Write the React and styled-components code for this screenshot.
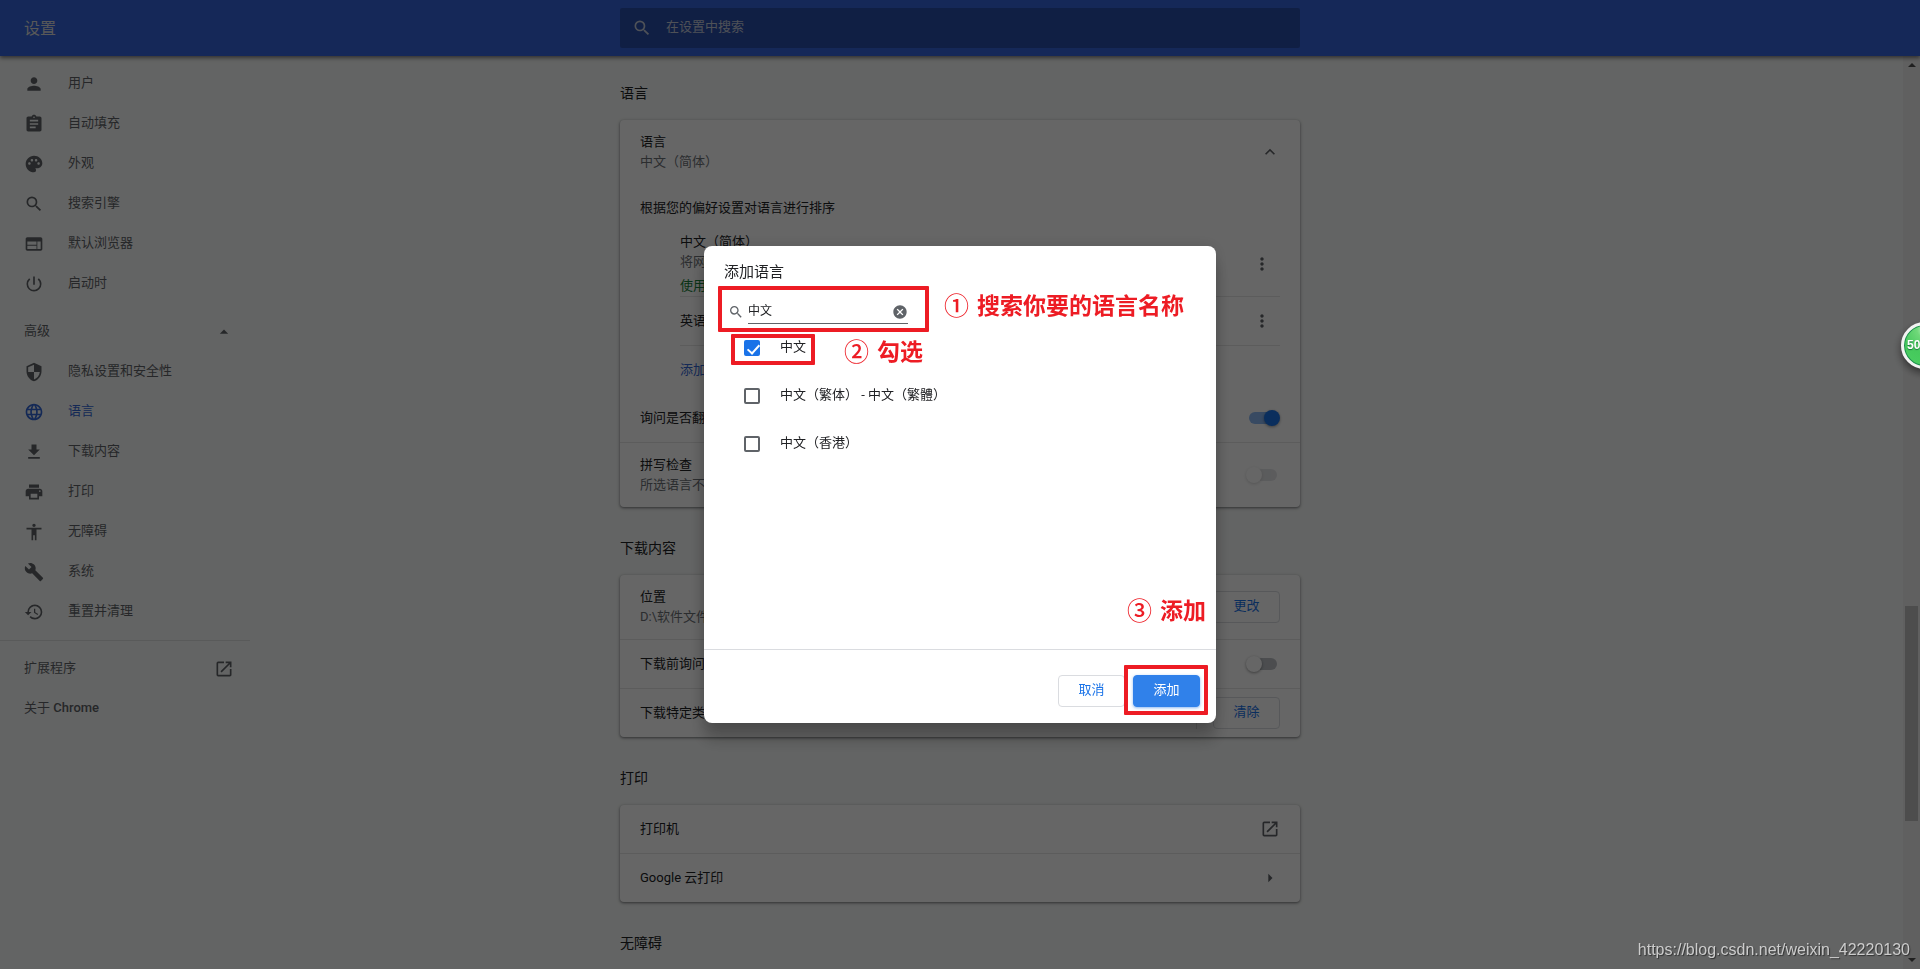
import styled, { createGlobalStyle, css } from 'styled-components'
import {
  MdAccessibility,
  MdArrowDropUp,
  MdArrowRight,
  MdAssignment,
  MdBuild,
  MdCancel,
  MdExpandLess,
  MdFileDownload,
  MdHistory,
  MdLanguage,
  MdMoreVert,
  MdOpenInNew,
  MdPalette,
  MdPerson,
  MdPowerSettingsNew,
  MdPrint,
  MdSearch,
  MdSecurity,
  MdWeb
} from 'react-icons/md'

const GlobalStyle = createGlobalStyle`
  * {
    box-sizing: border-box;
  }

  body {
    background: #f8faf9;
    color: #202124;
    font-family: Roboto, 'Noto Sans CJK SC', sans-serif;
    font-size: 13px;
    line-height: 20px;
    margin: 0;
    overflow: hidden;
  }

  button,
  input {
    font: inherit;
  }

  h1, h2, p {
    font-weight: 400;
    margin: 0;
  }
`

const Page = styled.div`
  display: flex;
  flex-direction: column;
  height: 100vh;
  overflow: hidden;
`

const Side = styled.div`
  display: flex;
  flex: 1 1 0;
  justify-content: ${props => props.$end ? 'flex-end' : 'flex-start'};
  min-width: 0;
`

const Toolbar = styled.header`
  align-items: center;
  background: #3565dc;
  box-shadow: 0 2px 4px rgba(0, 0, 0, 0.5);
  display: flex;
  flex: none;
  height: 56px;
  z-index: 1;
`

const ToolbarTitle = styled.h1`
  color: #ddd;
  font-size: 16px;
  line-height: 24px;
  padding: 2px 0 0 24px;
`

const ToolbarSearch = styled.label`
  align-items: center;
  background: rgba(0, 0, 0, 0.22);
  border-radius: 2px;
  color: #c3cad9;
  display: flex;
  flex: 0 1 680px;
  gap: 14px;
  height: 40px;
  padding: 0 12px;

  input {
    background: none;
    border: 0;
    color: inherit;
    flex: 1;
    outline: 0;
    padding: 0 0 2px;
  }

  input::placeholder {
    color: inherit;
  }
`

const Body = styled.div`
  display: flex;
  flex: 1;
  min-height: 0;
`

const Menu = styled.nav`
  padding-top: 8px;
  width: 250px;
`

const MenuItem = styled.a`
  align-items: center;
  color: ${props => props.$selected ? '#3367d6' : '#5f6368'};
  display: flex;
  gap: 24px;
  height: 40px;
  padding: 0 16px 0 24px;
  text-decoration: none;

  span {
    flex: 1;
    padding-bottom: 2px;
  }

  b {
    font-weight: 500;
  }
`

const MenuToggle = styled.button`
  align-items: center;
  background: none;
  border: 0;
  color: #5f6368;
  display: flex;
  height: 40px;
  justify-content: space-between;
  margin-top: 8px;
  padding: 0 16px 0 24px;
  width: 100%;

  span {
    padding-bottom: 2px;
  }
`

const MenuSeparator = styled.hr`
  border: 0;
  border-top: 1px solid #dfe1e2;
  margin: 8px 0;
`

const Main = styled.main`
  flex: 0 1 680px;
`

const SectionTitle = styled.h2`
  font-size: 14px;
  height: 68px;
  line-height: 20px;
  padding-top: 31px;

  section:first-child > & {
    height: 64px;
    padding-top: 27px;
  }
`

const Card = styled.div`
  background: white;
  border-radius: 4px;
  box-shadow: 0 1px 2px rgba(60, 64, 67, 0.4), 0 1px 3px 1px rgba(60, 64, 67, 0.25);
`

const Row = styled.div`
  align-items: center;
  border-top: ${props => props.$line ? '1px solid #e6e6e6' : '0'};
  display: flex;
  justify-content: space-between;
  min-height: ${props => (props.$tall ? 64 : 48) + (props.$line ? 1 : 0)}px;
  padding: 0 20px;

  > svg {
    color: #5f6368;
  }
`

const Secondary = styled.p`
  color: #6c7176;
`

const LanguageList = styled.div`
  padding: 0 20px 0 60px;
`

const Language = styled.div`
  align-items: center;
  border-bottom: ${props => props.$last ? '0' : '1px solid #e6e6e6'};
  display: flex;
  justify-content: space-between;
  min-height: ${props => props.$last ? 48 : 49}px;
`

const InUse = styled.p`
  color: #188038;
  padding: 4px 0 0;
`

const DotsButton = styled.button`
  align-items: center;
  background: none;
  border: 0;
  color: #5f6368;
  display: flex;
  height: 36px;
  justify-content: center;
  padding: 0;
  width: 36px;
`

const AddLink = styled.a`
  color: #3367d6;
  text-decoration: none;
`

const Toggle = styled.input`
  appearance: none;
  background: #bdc1c6;
  border-radius: 6px;
  height: 12px;
  margin: 0 3px;
  opacity: ${props => props.disabled ? 0.4 : 1};
  position: relative;
  width: 28px;

  &:before {
    background: white;
    border-radius: 50%;
    box-shadow: 0 1px 3px rgba(0, 0, 0, 0.4);
    content: '';
    height: 16px;
    left: -3px;
    position: absolute;
    top: -2px;
    width: 16px;
  }

  &:checked {
    background: #8cb9f4;
  }

  &:checked:before {
    background: #1a73e8;
    left: 15px;
  }
`

const Button = styled.button`
  background: none;
  border: 1px solid #dadce0;
  border-radius: 4px;
  color: #1a73e8;
  height: 32px;
  line-height: 20px;
  padding: 0 19px 2px;
  width: 67px;

  ${props => props.$primary && css`
    background: #3081ea;
    border-color: #3081ea;
    box-shadow: 0 1px 3px rgba(26, 115, 232, 0.5);
    color: white;
  `}
`

const Divided = styled.div`
  border-left: 1px solid #dfdfdf;
  padding-left: 16px;
`

const Scrollbar = styled.div`
  align-items: center;
  background: #f1f1f1;
  display: flex;
  flex-direction: column;
  justify-content: space-between;
  padding: 7px 0;
  width: 17px;
`

const Arrow = styled.i`
  border: 4px solid transparent;
  border-${props => props.$down ? 'top' : 'bottom'}-color: #505050;
  border-${props => props.$down ? 'bottom' : 'top'}-width: 0;
  height: 4px;
  width: 8px;
`

const ScrollTrack = styled.div`
  display: grid;
  flex: 1;
  grid-template-rows: 539fr 215fr 137fr;
  width: 13px;
`

const Thumb = styled.div`
  background: #c1c1c1;
  grid-row: 2;
`

const Backdrop = styled.div`
  align-items: center;
  background: rgba(0, 0, 0, 0.6);
  display: flex;
  inset: 0;
  justify-content: center;
  position: fixed;
  z-index: 2;
`

const Dialog = styled.div`
  background: white;
  border-radius: 8px;
  box-shadow: 0 0 16px rgba(0, 0, 0, 0.12), 0 16px 16px rgba(0, 0, 0, 0.24);
  position: relative;
  width: 512px;
`

const DialogTitle = styled.h2`
  font-size: 15px;
  line-height: 22px;
  padding: 15px 20px 17px;
`

const DialogSearch = styled.label`
  align-items: center;
  color: #5f6368;
  display: flex;
  gap: 4px;
  height: 24px;
  margin-left: 24px;
`

const SearchField = styled.div`
  align-items: center;
  border-bottom: 1px solid #5f6368;
  display: flex;
  height: 24px;
  width: 160px;

  input {
    border: 0;
    color: #202124;
    flex: 1;
    font-size: 12px;
    min-width: 0;
    outline: 0;
    padding: 0 0 2px;
  }

  button {
    background: none;
    border: 0;
    color: #5f6368;
    display: flex;
    padding: 0;
  }
`

const Options = styled.div`
  min-height: 325px;
  padding-left: 40px;
`

const Option = styled.label`
  align-items: center;
  display: flex;
  gap: 20px;
  height: 48px;

  span {
    padding-bottom: 2px;
  }
`

const Checkbox = styled.input`
  appearance: none;
  border: 2px solid #5f6368;
  border-radius: 2px;
  height: 16px;
  margin: 0;
  position: relative;
  width: 16px;

  &:checked {
    background: #1a73e8;
    border-color: #1a73e8;
  }

  &:checked:before {
    border: solid white;
    border-width: 0 2px 2px 0;
    content: '';
    height: 10px;
    left: 4px;
    position: absolute;
    top: 0;
    transform: rotate(42deg);
    width: 5px;
  }
`

const DialogFooter = styled.div`
  border-top: 1px solid #dadce0;
  display: flex;
  gap: 8px;
  justify-content: flex-end;
  padding: 25px 16px 16px;
`

// red frames and captions drawn over the dialog
const Frame = styled.div`
  border: 4px solid #ed1c24;
  border-radius: 1px;
  height: ${props => props.$h}px;
  left: ${props => props.$x}px;
  pointer-events: none;
  position: absolute;
  top: ${props => props.$y}px;
  width: ${props => props.$w}px;
`

const Caption = styled.p`
  align-items: center;
  color: #ed1c24;
  display: flex;
  font-family: 'Noto Sans CJK SC', sans-serif;
  font-size: 23px;
  font-weight: 700;
  gap: 8px;
  left: ${props => props.$x}px;
  line-height: 32px;
  position: absolute;
  top: ${props => props.$y}px;
  white-space: nowrap;

  span {
    font-size: 25px;
    font-weight: 500;
  }
`

const Ball = styled.div`
  background: radial-gradient(circle at 50% 12%, #b8f0bb 0, #6fd879 18%, #45c95c 55%, #4bd062 100%);
  border: 3px solid #f2f2f2;
  border-radius: 50%;
  box-shadow: inset 0 0 0 1px #1e8b50, 0 4px 8px rgba(0, 0, 0, 0.5);
  color: white;
  font-family: 'Liberation Sans', sans-serif;
  font-size: 12px;
  font-weight: 700;
  height: 47px;
  line-height: 41px;
  padding-left: 3px;
  position: fixed;
  right: -28px;
  text-shadow: 0 1px 1px #17703a;
  top: 322px;
  width: 47px;
  z-index: 3;
`

const Watermark = styled.p`
  bottom: 9px;
  color: #ccc;
  font-family: 'Liberation Sans', sans-serif;
  font-size: 16px;
  position: fixed;
  right: 10px;
  text-shadow: 1px 1px 1px rgba(0, 0, 0, 0.5);
  z-index: 3;
`

const basicItems = [
  [MdPerson, '用户'],
  [MdAssignment, '自动填充'],
  [MdPalette, '外观'],
  [MdSearch, '搜索引擎'],
  [MdWeb, '默认浏览器'],
  [MdPowerSettingsNew, '启动时']
]

const advancedItems = [
  [MdSecurity, '隐私设置和安全性'],
  [MdLanguage, '语言'],
  [MdFileDownload, '下载内容'],
  [MdPrint, '打印'],
  [MdAccessibility, '无障碍'],
  [MdBuild, '系统'],
  [MdHistory, '重置并清理']
]

const options = ['中文', '中文（繁体） - 中文（繁體）', '中文（香港）']

const MenuItems = ({ items }) => items.map(([Icon, label]) => (
  <MenuItem key={label} href="#" $selected={label === '语言'}>
    <Icon size={20} />
    <span>{label}</span>
  </MenuItem>
))

const Sidebar = () => (
  <Menu>
    <MenuItems items={basicItems} />
    <MenuToggle>
      <span>高级</span>
      <MdArrowDropUp size={20} />
    </MenuToggle>
    <MenuItems items={advancedItems} />
    <MenuSeparator />
    <MenuItem href="#">
      <span>扩展程序</span>
      <MdOpenInNew size={20} />
    </MenuItem>
    <MenuItem href="#">
      <span>关于 <b>Chrome</b></span>
    </MenuItem>
  </Menu>
)

const LanguageSection = () => (
  <section>
    <SectionTitle>语言</SectionTitle>
    <Card>
      <Row $tall>
        <div>
          语言
          <Secondary>中文（简体）</Secondary>
        </div>
        <MdExpandLess size={20} />
      </Row>
      <Row>根据您的偏好设置对语言进行排序</Row>
      <LanguageList>
        <Language>
          <div>
            中文（简体）
            <Secondary>将网页</Secondary>
            <InUse>使用中</InUse>
          </div>
          <DotsButton aria-label="更多操作"><MdMoreVert size={20} /></DotsButton>
        </Language>
        <Language>
          英语
          <DotsButton aria-label="更多操作"><MdMoreVert size={20} /></DotsButton>
        </Language>
        <Language $last>
          <AddLink href="#">添加语言</AddLink>
        </Language>
      </LanguageList>
      <Row>
        <label htmlFor="translate">询问是否翻译网页</label>
        <Toggle id="translate" type="checkbox" defaultChecked />
      </Row>
      <Row $tall $line>
        <label htmlFor="spelling">
          拼写检查
          <Secondary>所选语言不支持拼写检查</Secondary>
        </label>
        <Toggle id="spelling" type="checkbox" disabled />
      </Row>
    </Card>
  </section>
)

const DownloadSection = () => (
  <section>
    <SectionTitle>下载内容</SectionTitle>
    <Card>
      <Row $tall>
        <div>
          位置
          <Secondary>D:\软件文件</Secondary>
        </div>
        <Button>更改</Button>
      </Row>
      <Row $line>
        <label htmlFor="ask">下载前询问保存位置</label>
        <Toggle id="ask" type="checkbox" />
      </Row>
      <Row $line>
        下载特定类型的文件后自动打开
        <Divided><Button>清除</Button></Divided>
      </Row>
    </Card>
  </section>
)

const PrintSection = () => (
  <section>
    <SectionTitle>打印</SectionTitle>
    <Card>
      <Row>
        打印机
        <MdOpenInNew size={20} />
      </Row>
      <Row $line>
        Google 云打印
        <MdArrowRight size={20} />
      </Row>
    </Card>
  </section>
)

const AddLanguageDialog = () => (
  <Backdrop>
    <Dialog role="dialog" aria-labelledby="dialog-title">
      <DialogTitle id="dialog-title">添加语言</DialogTitle>
      <DialogSearch>
        <MdSearch size={16} />
        <SearchField>
          <input type="text" aria-label="搜索语言" defaultValue="中文" />
          <button aria-label="清除搜索"><MdCancel size={16} /></button>
        </SearchField>
      </DialogSearch>
      <Options>
        {options.map((option, i) => (
          <Option key={option}>
            <Checkbox type="checkbox" defaultChecked={i === 0} />
            <span>{option}</span>
          </Option>
        ))}
      </Options>
      <DialogFooter>
        <Button>取消</Button>
        <Button $primary>添加</Button>
      </DialogFooter>
      <Frame $x={14} $y={40} $w={211} $h={46} />
      <Frame $x={27} $y={88} $w={84} $h={31} />
      <Frame $x={420} $y={419} $w={84} $h={50} />
      <Caption $x={240} $y={42}><span>①</span>搜索你要的语言名称</Caption>
      <Caption $x={140} $y={88}><span>②</span>勾选</Caption>
      <Caption $x={423} $y={347}><span>③</span>添加</Caption>
    </Dialog>
  </Backdrop>
)

export default () => (
  <>
    <GlobalStyle />
    <Page lang="zh-CN">
      <Toolbar>
        <Side><ToolbarTitle>设置</ToolbarTitle></Side>
        <ToolbarSearch>
          <MdSearch size={20} />
          <input type="text" placeholder="在设置中搜索" aria-label="在设置中搜索" />
        </ToolbarSearch>
        <Side />
      </Toolbar>
      <Body>
        <Side><Sidebar /></Side>
        <Main>
          <LanguageSection />
          <DownloadSection />
          <PrintSection />
          <section>
            <SectionTitle>无障碍</SectionTitle>
          </section>
        </Main>
        <Side $end>
          <Scrollbar>
            <Arrow />
            <ScrollTrack><Thumb /></ScrollTrack>
            <Arrow $down />
          </Scrollbar>
        </Side>
      </Body>
    </Page>
    <AddLanguageDialog />
    <Ball>50</Ball>
    <Watermark>https://blog.csdn.net/weixin_42220130</Watermark>
  </>
)
